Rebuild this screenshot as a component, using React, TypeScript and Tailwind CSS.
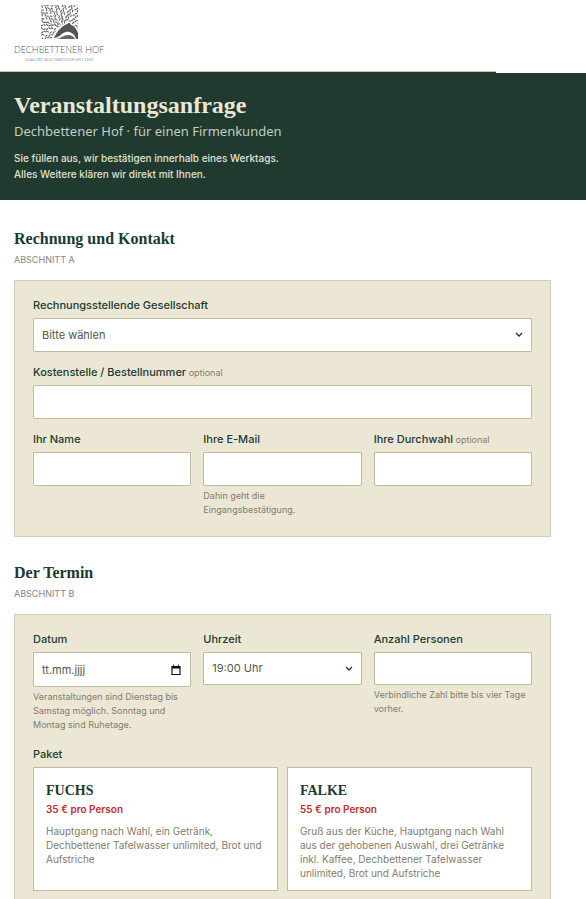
import { useState, ReactNode } from 'react'

const PACKAGES = [
  {
    id: 'fuchs',
    name: 'FUCHS',
    price: '35 € pro Person',
    description: 'Hauptgang nach Wahl, ein Getränk,\nDechbettener Tafelwasser unlimited, Brot und Aufstriche',
  },
  {
    id: 'falke',
    name: 'FALKE',
    price: '55 € pro Person',
    description:
      'Gruß aus der Küche, Hauptgang nach Wahl\naus der gehobenen Auswahl, drei Getränke\ninkl. Kaffee, Dechbettener Tafelwasser\nunlimited, Brot und Aufstriche',
  },
]

const TIMES = ['17:00', '18:00', '19:00', '20:00']

const control =
  'block w-full rounded-[1px] border border-[#c2bc9f] bg-white px-2 text-[11px] text-[#55534d] outline-none focus:border-[#203a2f]'

// Leaves fan out from the foot of the tree, one ring after the other
const LEAVES = Array.from({ length: 13 }, (_, ring) => {
  const radius = 5 + ring * 2.6
  const count = Math.round(radius * 1.9)
  return Array.from({ length: count }, (_, i) => {
    const angle = ((i + (ring % 2) * 0.5) / count) * Math.PI * 2
    const bend = angle + (i % 2 ? 0.7 : -0.5)
    const x = 22 + Math.cos(angle) * radius
    const y = 22 + Math.sin(angle) * radius
    return `M${x.toFixed(1)} ${y.toFixed(1)}l${(Math.cos(bend) * 1.7).toFixed(1)} ${(Math.sin(bend) * 1.7).toFixed(1)}`
  }).join('')
}).join('')

function Logo() {
  return (
    <svg viewBox="0 0 92 60" className="block h-[60px] w-[92px]" role="img" aria-label="Dechbettener Hof">
      <svg x="27" y="1" width="37" height="34" viewBox="0 0 37 34">
        <path d={LEAVES} stroke="#5c5c5c" strokeWidth="1.1" strokeLinecap="round" fill="none" />
        <path d="M22 23L12 10M22 23L20 7M22 23L27 8M22 23L7 18M22 23L33 13" stroke="#666" strokeWidth="0.6" fill="none" />
        <path d="M11 34C14 26 19 20 26 18L29 16L31 20C34 21 36 23 37 25V34Z" fill="#fff" />
        <path d="M13 33C16 26 21 21 26 19L28.500 17.500L30 20C34 21 36 25 37 28V34H35C34 29 29 26 25 27C20 28 20 32 13 33Z" fill="#555" />
        <path d="M15 34C20 33.500 22 30 27 30C31 30 33 32 34 34Z" fill="#666" />
      </svg>
      <text x="45" y="49" textAnchor="middle" fontSize="9" fill="#555" className="font-['Lato',sans-serif] font-light">
        DECHBETTENER HOF
      </text>
      <text x="45" y="57" textAnchor="middle" fontSize="4" fill="#999" className="font-['Lato',sans-serif]">
        QUALITÄT AUS TRADITION SEIT 1949
      </text>
    </svg>
  )
}

type FieldProps = {
  id: string
  label: string
  optional?: boolean
  hint?: string
  children: ReactNode
}

function Field({ id, label, optional, hint, children }: FieldProps) {
  return (
    <div className="min-w-0">
      <label htmlFor={id} className="mb-[5px] block text-[11px] leading-4 font-medium text-[#203a2f]">
        {label}
        {optional && <span className="text-[9px] leading-none font-normal text-[#827c6c]"> optional</span>}
      </label>
      {children}
      {hint && <p className="mt-[3px] text-[9px] leading-[14px] whitespace-pre-line text-[#827c6c]">{hint}</p>}
    </div>
  )
}

function Chevron() {
  return (
    <svg viewBox="0 0 8 6" className="pointer-events-none absolute top-1/2 right-[9px] h-[6px] w-2 -translate-y-1/2" fill="none">
      <path d="M1 1l3 3 3-3" stroke="#203a2f" strokeWidth="1.3" />
    </svg>
  )
}

function Section({ title, part, children }: { title: string; part: string; children: ReactNode }) {
  return (
    <section className="mb-6">
      <h2 className="font-['Liberation_Serif',serif] text-[16px] leading-6 font-bold text-[#203a2f]">{title}</h2>
      <p className="mt-[2px] mb-[13px] text-[9px] leading-[14px] text-[#858585]">{part}</p>
      <div className="flex flex-col gap-3 border border-[#d2cdb5] bg-[#ece7d5] px-[18px] pt-4 pb-[19px]">{children}</div>
    </section>
  )
}

export default function App() {
  const [time, setTime] = useState('19:00')
  const [selected, setSelected] = useState('')

  return (
    <div className="min-h-screen bg-white font-['Inter',sans-serif]">
      <header>
        <div className="h-[71px] px-[14px] pt-1">
          <Logo />
        </div>
        <div className="mr-[90px] h-[2px] border-t border-[#c9c7b0] bg-[#203a2f]" />
        <div className="bg-[#203a2f] px-[14px] pt-4 pb-[18px]">
          <h1 className="font-['Liberation_Serif',serif] text-[24px] leading-8 font-bold text-[#ece7d5]">
            Veranstaltungsanfrage
          </h1>
          <p className="mt-px font-['Noto_Sans',sans-serif] text-[13px] leading-[18px] text-[#c3cdc0]">
            Dechbettener Hof · für einen Firmenkunden
          </p>
          <p className="mt-[10px] text-[10px] leading-4 font-medium text-[#e0e2d2]">
            Sie füllen aus, wir bestätigen innerhalb eines Werktags.
            <br />
            Alles Weitere klären wir direkt mit Ihnen.
          </p>
        </div>
      </header>

      <form className="pt-[27px] pr-[35px] pl-[14px]">
        <Section title="Rechnung und Kontakt" part="ABSCHNITT A">
          <Field id="company" label="Rechnungsstellende Gesellschaft">
            <div className="relative">
              <select id="company" defaultValue="" className={`${control} h-[34px] appearance-none`}>
                <option value="">Bitte wählen</option>
              </select>
              <Chevron />
            </div>
          </Field>
          <Field id="costCenter" label="Kostenstelle / Bestellnummer" optional>
            <input id="costCenter" type="text" className={`${control} h-[34px]`} />
          </Field>
          <div className="grid grid-cols-3 gap-3">
            <Field id="name" label="Ihr Name">
              <input id="name" type="text" className={`${control} h-[34px]`} />
            </Field>
            <Field id="email" label="Ihre E-Mail" hint={'Dahin geht die\nEingangsbestätigung.'}>
              <input id="email" type="email" className={`${control} h-[34px]`} />
            </Field>
            <Field id="phone" label="Ihre Durchwahl" optional>
              <input id="phone" type="tel" className={`${control} h-[34px]`} />
            </Field>
          </div>
        </Section>

        <Section title="Der Termin" part="ABSCHNITT B">
          <div className="grid grid-cols-3 gap-3">
            <Field id="date" label="Datum" hint="Veranstaltungen sind Dienstag bis Samstag möglich. Sonntag und Montag sind Ruhetage.">
              <div className="relative">
                <input id="date" type="text" placeholder="tt.mm.jjjj" className={`${control} h-[35px] placeholder:text-[#55534d]`} />
                <button type="button" aria-label="Kalender öffnen" className="absolute top-1/2 right-[10px] -translate-y-1/2">
                  <svg viewBox="0 0 10 11" className="block h-[11px] w-[10px]" fill="none">
                    <path d="M1 2h8v8H1z" stroke="#111" strokeWidth="1.2" />
                    <path d="M1 2h8v2H1zM2 0h1v2H2zM7 0h1v2H7z" fill="#111" />
                  </svg>
                </button>
              </div>
            </Field>
            <Field id="time" label="Uhrzeit">
              <div className="relative">
                <select
                  id="time"
                  value={time}
                  onChange={(e) => setTime(e.target.value)}
                  className={`${control} h-[33px] appearance-none`}
                >
                  {TIMES.map((t) => (
                    <option key={t} value={t}>{`${t} Uhr`}</option>
                  ))}
                </select>
                <Chevron />
              </div>
            </Field>
            <Field id="guests" label="Anzahl Personen" hint="Verbindliche Zahl bitte bis vier Tage vorher.">
              <input id="guests" type="text" inputMode="numeric" className={`${control} h-[33px]`} />
            </Field>
          </div>

          <fieldset className="mt-[2px]">
            <legend className="mb-[5px] text-[11px] leading-4 font-medium text-[#203a2f]">Paket</legend>
            <div className="grid grid-cols-2 gap-[9px]">
              {PACKAGES.map((pkg) => (
                <label
                  key={pkg.id}
                  className="relative block cursor-pointer border border-[#c2bc9f] bg-white px-3 pt-[13px] pb-[10px] has-checked:border-[#203a2f]"
                >
                  <input
                    type="radio"
                    name="package"
                    value={pkg.id}
                    checked={selected === pkg.id}
                    onChange={() => setSelected(pkg.id)}
                    className="sr-only"
                  />
                  <span className="block font-['Liberation_Serif',serif] text-[14px] leading-5 font-bold text-[#203a2f]">{pkg.name}</span>
                  <span className="block text-[10px] leading-4 font-semibold text-[#bd2d2b]">{pkg.price}</span>
                  <span className="mt-[7px] block text-[10px] leading-[14px] whitespace-pre-line text-[#827c6c]">
                    {pkg.description}
                  </span>
                </label>
              ))}
            </div>
          </fieldset>
        </Section>
      </form>
    </div>
  )
}
